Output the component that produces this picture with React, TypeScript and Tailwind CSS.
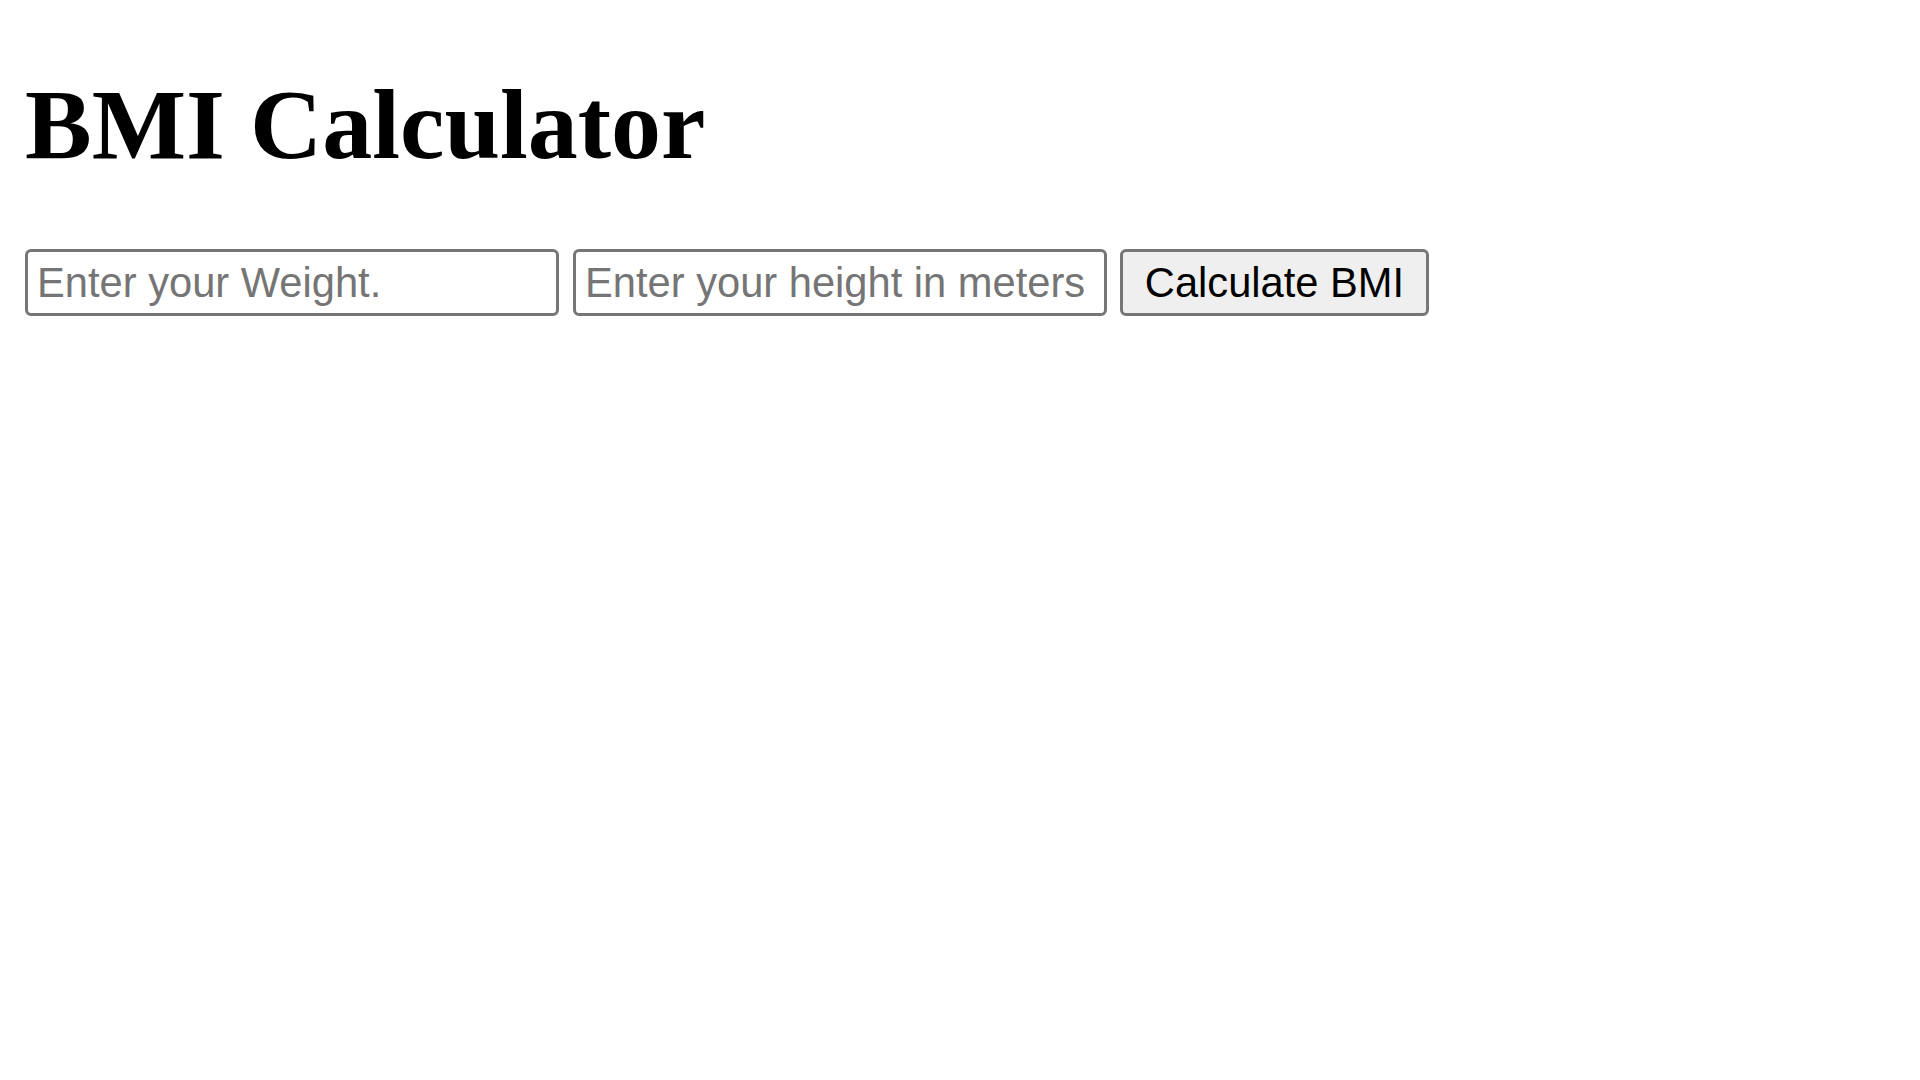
import React from "react";

export default function App() {
  return (
    <div className="min-h-screen bg-white px-[25px] pt-[67px] text-black font-['Liberation_Serif','Times_New_Roman',serif]">
      <h1 className="m-0 text-[100px] font-bold leading-[115px] font-['Liberation_Serif','Times_New_Roman',serif]">
        BMI Calculator
      </h1>
      <div className="mt-[67px] flex items-start font-['Liberation_Sans',Arial,sans-serif]">
        <input
          type="text"
          placeholder="Enter your Weight."
          className="w-[534px] h-[67px] border-[3px] border-solid border-[#767676] rounded-[6px] bg-white pl-[9px] pr-[6px] text-[41.67px] text-black placeholder:text-[#757575] outline-none"
        />
        <input
          type="text"
          placeholder="Enter your height in meters"
          className="ml-[14px] w-[534px] h-[67px] border-[3px] border-solid border-[#767676] rounded-[6px] bg-white pl-[9px] pr-[6px] text-[41.67px] text-black placeholder:text-[#757575] outline-none"
        />
        <button
          type="button"
          className="ml-[13px] w-[309px] h-[67px] border-[3px] border-solid border-[#767676] rounded-[6px] bg-[#efefef] px-[18px] text-[41.67px] text-black whitespace-nowrap"
        >
          Calculate BMI
        </button>
      </div>
    </div>
  );
}
